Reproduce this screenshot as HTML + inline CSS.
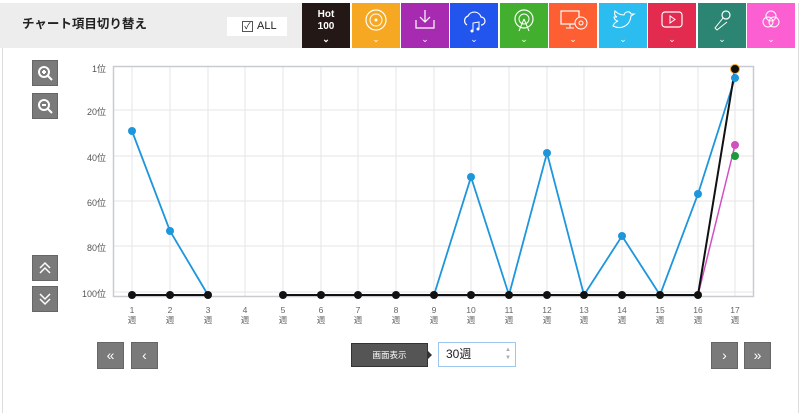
<!DOCTYPE html>
<html><head><meta charset="utf-8"><style>
body{margin:0;width:800px;height:403px;background:#fff;font-family:"Liberation Sans","Noto Sans CJK JP",sans-serif;position:relative;overflow:hidden}
.frame{position:absolute;left:2px;top:3px;width:795px;height:410px;border-left:1px solid #ddd;border-right:1px solid #ddd}
.hdr{position:absolute;left:0;top:3px;width:302px;height:45px;background:#ededed}
.ttl{position:absolute;left:22px;top:13px;font-size:12.5px;font-weight:bold;color:#222;line-height:16px}
.all{position:absolute;left:227px;top:14px;width:60px;height:19px;background:#fff;font-size:11px;color:#222}
.all span.cb{position:absolute;left:15px;top:4px;width:9px;height:9px;border:1px solid #555;font-size:9px;line-height:9px;text-align:center}
.all span.t{position:absolute;left:30px;top:3px}
.tab{position:absolute;top:3px;height:45px;width:48px}
.tab .ch{position:absolute;left:0;right:0;bottom:3px;text-align:center;color:#fff;font-size:9px}
.btn{position:absolute;background:#7a7a7a;border:1px solid #666;color:#fff;text-align:center}
.yl{position:absolute;font-size:9px;color:#555;text-align:right;width:40px}
.xl{position:absolute;font-size:8.5px;color:#666;text-align:center;width:20px;line-height:10px}
</style></head><body>
<div class="frame"></div>
<div class="hdr"><div class="ttl">チャート項目切り替え</div>
<div class="all"><span class="cb">✓</span><span class="t">ALL</span></div></div>

<div class="tab" style="left:302px;background:#231815;color:#fff;font-size:10px;font-weight:bold;text-align:center;line-height:12px;padding-top:6px;height:39px">Hot<br>100<div class="ch">⌄</div></div>
<div class="tab" style="left:352px;background:#f7a823"><svg width="48" height="45"><circle cx="24" cy="17" r="10" fill="none" stroke="#fff" stroke-width="1.2"/><circle cx="24" cy="17" r="6" fill="none" stroke="#fff"/><circle cx="24" cy="17" r="1.5" fill="#fff"/></svg><div class="ch">⌄</div></div>
<div class="tab" style="left:401px;background:#a72bb1"><svg width="48" height="45"><path d="M24 7v12M19 14l5 5 5-5M15 17v8h18v-8" fill="none" stroke="#fff" stroke-width="1.2"/></svg><div class="ch">⌄</div></div>
<div class="tab" style="left:450px;background:#2155ee"><svg width="48" height="45"><path d="M17 22a5 5 0 0 1 1-9 7 7 0 0 1 13 1 4 4 0 0 1 0 8" fill="none" stroke="#fff" stroke-width="1.2"/><path d="M23 28v-8l6-1v7" fill="none" stroke="#fff"/><circle cx="22" cy="28" r="1.5" fill="#fff"/><circle cx="28" cy="26" r="1.5" fill="#fff"/></svg><div class="ch">⌄</div></div>
<div class="tab" style="left:500px;background:#42b02e"><svg width="48" height="45"><circle cx="24" cy="16" r="9" fill="none" stroke="#fff" stroke-width="1.2"/><circle cx="24" cy="16" r="5" fill="none" stroke="#fff"/><path d="M24 16l-5 12M24 16l5 12" stroke="#fff"/></svg><div class="ch">⌄</div></div>
<div class="tab" style="left:549px;background:#fd5f33"><svg width="48" height="45"><rect x="12" y="8" width="18" height="13" fill="none" stroke="#fff" stroke-width="1.2"/><path d="M21 21v4M17 25h8" stroke="#fff"/><circle cx="32" cy="20" r="6" fill="#fd5f33" stroke="#fff"/><circle cx="32" cy="20" r="2" fill="none" stroke="#fff"/></svg><div class="ch">⌄</div></div>
<div class="tab" style="left:599px;background:#2bbcf0"><svg width="48" height="45"><path d="M14 23c8 4 17 0 18-10l3-2-3 0c-1-3-6-3-7 1-4 0-7-2-9-4-1 3 0 5 2 6-2 0-2 0-3 0 0 2 2 4 4 4-2 1-4 2-5 5z" fill="none" stroke="#fff" stroke-width="1.1"/></svg><div class="ch">⌄</div></div>
<div class="tab" style="left:648px;background:#e32a4f"><svg width="48" height="45"><rect x="14" y="9" width="20" height="15" rx="3" fill="none" stroke="#fff" stroke-width="1.2"/><path d="M22 13v7l5-3.5z" fill="none" stroke="#fff"/></svg><div class="ch">⌄</div></div>
<div class="tab" style="left:698px;background:#2b8572"><svg width="48" height="45"><circle cx="28" cy="12" r="4" fill="none" stroke="#fff" stroke-width="1.2"/><path d="M25 15l-8 10 2 2 10-8" fill="none" stroke="#fff"/></svg><div class="ch">⌄</div></div>
<div class="tab" style="left:747px;background:#fb5fd1"><svg width="48" height="45"><circle cx="24" cy="13" r="5" fill="none" stroke="#fff"/><circle cx="21" cy="19" r="5" fill="none" stroke="#fff"/><circle cx="27" cy="19" r="5" fill="none" stroke="#fff"/></svg><div class="ch">⌄</div></div>

<div class="btn" style="left:32px;top:60px;width:24px;height:24px"><svg width="24" height="24"><circle cx="11" cy="11" r="5" fill="none" stroke="#fff" stroke-width="2"/><path d="M15 15l4 4M9 11h4M11 9v4" stroke="#fff" stroke-width="2"/></svg></div>
<div class="btn" style="left:32px;top:93px;width:24px;height:24px"><svg width="24" height="24"><circle cx="11" cy="11" r="5" fill="none" stroke="#fff" stroke-width="2"/><path d="M15 15l4 4M9 11h4" stroke="#fff" stroke-width="2"/></svg></div>
<div class="btn" style="left:32px;top:255px;width:24px;height:24px"><svg width="24" height="24"><path d="M7 12l5-5 5 5M7 17l5-5 5 5" fill="none" stroke="#fff" stroke-width="1.5"/></svg></div>
<div class="btn" style="left:32px;top:286px;width:24px;height:24px"><svg width="24" height="24"><path d="M7 7l5 5 5-5M7 12l5 5 5-5" fill="none" stroke="#fff" stroke-width="1.5"/></svg></div>

<div class="yl" style="left:66px;top:62px">1位</div>
<div class="yl" style="left:66px;top:105px">20位</div>
<div class="yl" style="left:66px;top:151px">40位</div>
<div class="yl" style="left:66px;top:196px">60位</div>
<div class="yl" style="left:66px;top:241px">80位</div>
<div class="yl" style="left:66px;top:287px">100位</div>

<svg style="position:absolute;left:0;top:0" width="800" height="403">
<g stroke="#e6e6e6" stroke-width="1">
<path d="M113 110H754M113 156H754M113 201H754M113 246H754M113 292H754"/>
<path d="M132 66V297M170 66V297M208 66V297M245 66V297M283 66V297M321 66V297M358 66V297M396 66V297M434 66V297M471 66V297M509 66V297M547 66V297M584 66V297M622 66V297M660 66V297M698 66V297M735 66V297"/>
</g>
<rect x="113.5" y="66.5" width="640" height="230" fill="none" stroke="#c8ccd2" stroke-width="1.5"/>
<polyline points="132,131 170,231 208,295" fill="none" stroke="#1e96dc" stroke-width="1.8"/>
<polyline points="434,295 471,177 509,295 547,153 584,295 622,236 660,295 698,194 735,78" fill="none" stroke="#1e96dc" stroke-width="1.8"/>
<polyline points="698,295 735,145" fill="none" stroke="#d050c0" stroke-width="1.5"/>
<polyline points="132,295 170,295 208,295" fill="none" stroke="#111" stroke-width="2"/>
<polyline points="283,295 321,295 358,295 396,295 434,295 471,295 509,295 547,295 584,295 622,295 660,295 698,295 735,69" fill="none" stroke="#111" stroke-width="2"/>
<g fill="#1e96dc"><circle cx="132" cy="131" r="4"/><circle cx="170" cy="231" r="4"/><circle cx="471" cy="177" r="4"/><circle cx="547" cy="153" r="4"/><circle cx="622" cy="236" r="4"/><circle cx="698" cy="194" r="4"/><circle cx="735" cy="78" r="4"/></g>
<circle cx="735" cy="145" r="4" fill="#d050c0"/><circle cx="735" cy="156" r="4" fill="#1a9a3a"/>
<g fill="#111"><circle cx="132" cy="295" r="4"/><circle cx="170" cy="295" r="4"/><circle cx="208" cy="295" r="4"/><circle cx="283" cy="295" r="4"/><circle cx="321" cy="295" r="4"/><circle cx="358" cy="295" r="4"/><circle cx="396" cy="295" r="4"/><circle cx="434" cy="295" r="4"/><circle cx="471" cy="295" r="4"/><circle cx="509" cy="295" r="4"/><circle cx="547" cy="295" r="4"/><circle cx="584" cy="295" r="4"/><circle cx="622" cy="295" r="4"/><circle cx="660" cy="295" r="4"/><circle cx="698" cy="295" r="4"/></g>
<circle cx="735" cy="69" r="4.5" fill="#111" stroke="#f7a823" stroke-width="1"/>
</svg>

<div class="xl" style="left:122px;top:305px">1<br>週</div><div class="xl" style="left:160px;top:305px">2<br>週</div><div class="xl" style="left:198px;top:305px">3<br>週</div><div class="xl" style="left:235px;top:305px">4<br>週</div><div class="xl" style="left:273px;top:305px">5<br>週</div><div class="xl" style="left:311px;top:305px">6<br>週</div><div class="xl" style="left:348px;top:305px">7<br>週</div><div class="xl" style="left:386px;top:305px">8<br>週</div><div class="xl" style="left:424px;top:305px">9<br>週</div><div class="xl" style="left:461px;top:305px">10<br>週</div><div class="xl" style="left:499px;top:305px">11<br>週</div><div class="xl" style="left:537px;top:305px">12<br>週</div><div class="xl" style="left:574px;top:305px">13<br>週</div><div class="xl" style="left:612px;top:305px">14<br>週</div><div class="xl" style="left:650px;top:305px">15<br>週</div><div class="xl" style="left:688px;top:305px">16<br>週</div><div class="xl" style="left:725px;top:305px">17<br>週</div>

<div class="btn" style="left:97px;top:342px;width:25px;height:25px;font-size:14px;line-height:24px">«</div>
<div class="btn" style="left:131px;top:342px;width:25px;height:25px;font-size:14px;line-height:24px">‹</div>
<div style="position:absolute;left:351px;top:343px;width:77px;height:24px;background:#555;border:1px solid #333;box-sizing:border-box;color:#fff;font-size:8.5px;text-align:center;line-height:22px">画面表示</div>
<div style="position:absolute;left:428px;top:351px;width:0;height:0;border-top:4px solid transparent;border-bottom:4px solid transparent;border-left:4px solid #333"></div>
<div style="position:absolute;left:438px;top:342px;width:78px;height:25px;border:1px solid #9cc7ee;box-sizing:border-box;background:#fff;font-size:12px;line-height:23px;padding-left:7px;color:#222">30週<span style="position:absolute;right:4px;top:3px;font-size:6px;line-height:8px;color:#aaa">▲<br>▼</span></div>
<div class="btn" style="left:711px;top:342px;width:25px;height:25px;font-size:14px;line-height:24px">›</div>
<div class="btn" style="left:744px;top:342px;width:25px;height:25px;font-size:14px;line-height:24px">»</div>
</body></html>
